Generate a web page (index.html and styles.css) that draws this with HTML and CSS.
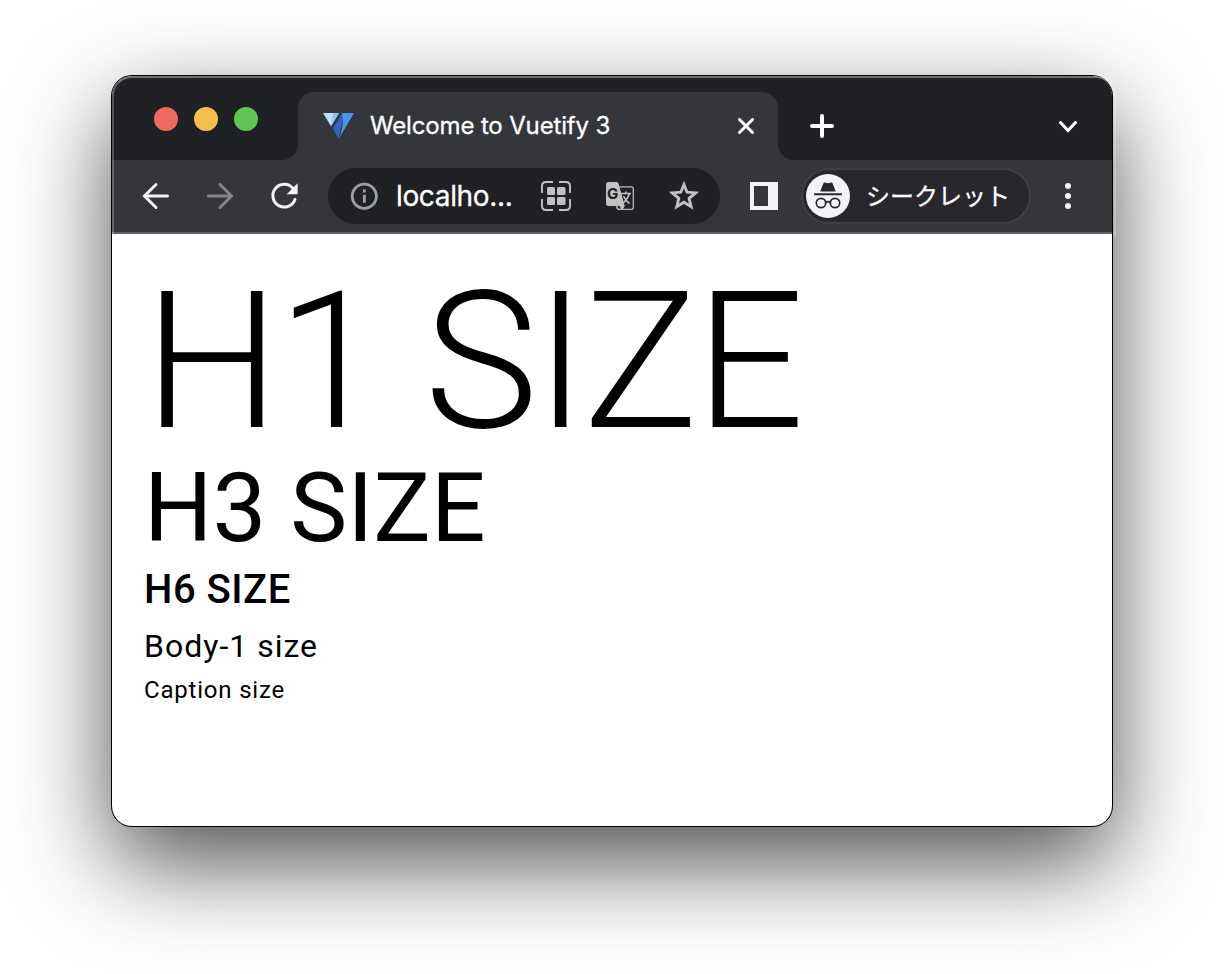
FILE: index.html
```html
<!DOCTYPE html>
<html lang="ja">
<head>
    <meta charset="UTF-8">
    <title>Welcome to Vuetify 3</title>
    <link rel="stylesheet" href="styles.css">
</head>
<body>
<div class="window">
    <div class="tab_bar">
        <div class="lights">
            <span class="light red"></span>
            <span class="light yellow"></span>
            <span class="light green"></span>
        </div>
        <div class="tab">
            <svg class="favicon" width="31" height="26" viewBox="0 0 31 26">
                <path fill="#b9dffc" d="M0 0H16L8 13.3z"/>
                <path fill="#86c1f8" d="M10.5 0H16L8 13.3C10 9 9 4 10.5 0z"/>
                <path fill="#3164bd" d="M19.3 0H21L15.7 26L9.8 15.6z"/>
                <path fill="#4596f0" d="M19.3 0H31L15.7 26C19.5 18 20.5 9 19.3 0z"/>
            </svg>
            <span class="tab_title">Welcome to Vuetify 3</span>
            <svg class="close" width="16" height="16" viewBox="0 0 16 16"><path d="M1.5 1.5L14.5 14.5M14.5 1.5L1.5 14.5"/></svg>
        </div>
        <svg class="plus" width="24" height="24" viewBox="0 0 24 24"><path d="M12 2V22M2 12H22"/></svg>
        <svg class="chevron" width="18" height="12" viewBox="0 0 18 12"><path d="M1.5 1.5L9 9.5L16.5 1.5"/></svg>
    </div>
    <div class="toolbar">
        <div class="btn">
            <svg width="28" height="28" viewBox="0 0 28 28"><path class="line" d="M25.5 14H3M14 2.5L2.5 14L14 25.5"/></svg>
        </div>
        <div class="btn dim">
            <svg width="28" height="28" viewBox="0 0 28 28"><path class="line" d="M2.5 14H25M14 2.5L25.5 14L14 25.5"/></svg>
        </div>
        <div class="btn">
            <svg width="28" height="28" viewBox="0 0 28 28">
                <path class="line" d="M22.7 6A11.4 11.4 0 1 0 25 17.5"/>
                <path fill="#f1f3f4" d="M27.6 1.2V12.2H16.6z"/>
            </svg>
        </div>
        <div class="address">
            <svg class="info" width="28" height="28" viewBox="0 0 28 28">
                <circle cx="14.3" cy="14.3" r="12.1" fill="none" stroke="#9aa0a6" stroke-width="2.8"/>
                <path fill="#9aa0a6" d="M12.9 7.6h2.9v2.9h-2.9zM12.9 12.7h2.9v8.1h-2.9z"/>
            </svg>
            <span class="url">localho...</span>
            <div class="btn">
                <svg width="30" height="30" viewBox="0 0 30 30">
                    <path fill="none" stroke="#c1c1c1" stroke-width="1.9" d="M1 12V5Q1 1 5 1H12M18 1H25Q29 1 29 5V12M29 18V25Q29 29 25 29H18M12 29H5Q1 29 1 25V18"/>
                    <g fill="#c1c1c1">
                        <rect x="6" y="6" width="8" height="8" rx="1.5"/>
                        <rect x="16" y="6" width="8.5" height="8" rx="1.5"/>
                        <rect x="6" y="16" width="8" height="8" rx="1.5"/>
                        <rect x="16" y="16" width="8.5" height="8" rx="1.5"/>
                    </g>
                </svg>
            </div>
            <div class="btn">
                <svg width="28" height="28" viewBox="0 0 28 28">
                    <rect x="11" y="5" width="16.2" height="22.2" rx="2" fill="none" stroke="#b8b8b8" stroke-width="1.6"/>
                    <path fill="#c1c1c1" d="M2.5 0H10.5Q12 0 12.5 1.5L19 24L16 28L13.5 24H2.5Q0 24 0 21.5V2.5Q0 0 2.5 0z"/>
                    <path fill="#202124" d="M13.8 5.8H26.4V26.4H17.6L19 24z"/>
                    <text class="tr_g" x="1" y="17">G</text>
                    <path fill="none" stroke="#c1c1c1" stroke-width="1.6" d="M15 11.5H25M19.8 9.5V11.5M23.4 11.5Q21.5 17.5 16.5 21.5M17.5 14Q19.5 18.5 23.5 21.5"/>
                </svg>
            </div>
            <div class="btn">
                <svg width="30" height="30" viewBox="0 0 30 30"><path fill="none" stroke="#c1c1c1" stroke-width="2.7" d="M15 4.2L17.9 11.4L25.9 12L19.8 17.1L21.7 25L15 20.8L8.3 25L10.2 17.1L4.1 12L12.1 11.4z" transform="translate(-1.1 -1) scale(1.07)"/></svg>
            </div>
        </div>
        <div class="btn panel">
            <svg width="28" height="28" viewBox="0 0 28 28"><path fill="#f1f3f4" fill-rule="evenodd" d="M0 0H28V28H0zM4 4V24H18V4z"/></svg>
        </div>
        <div class="incognito">
            <svg width="44" height="44" viewBox="0 0 44 44">
                <circle cx="22" cy="22" r="22" fill="#f1f3f4"/>
                <path fill="#28282c" d="M14.2 17.4L17.5 9Q18 8.2 19 8.6Q22 9.8 25 8.6Q26 8.2 26.5 9L29.8 17.4zM8 19.2H36V21.2H8z"/>
                <g fill="none" stroke="#28282c" stroke-width="1.7">
                    <circle cx="15" cy="29" r="4.7"/>
                    <circle cx="29" cy="29" r="4.7"/>
                    <path d="M19.6 28.4Q22 27 24.4 28.4"/>
                </g>
            </svg>
            <span>シークレット</span>
        </div>
        <div class="btn menu">
            <svg width="6" height="26" viewBox="0 0 6 26" fill="#f1f3f4">
                <circle cx="3" cy="3" r="3"/>
                <circle cx="3" cy="13" r="3"/>
                <circle cx="3" cy="23" r="3"/>
            </svg>
        </div>
    </div>
    <div class="container">
        <div class="text-h1">H1 SIZE</div>
        <div class="text-h3">H3 SIZE</div>
        <div class="text-h6">H6 SIZE</div>
        <div class="text-body-1">Body-1 size</div>
        <div class="text-caption">Caption size</div>
    </div>
</div>
</body>
</html>
```
FILE: styles.css
```css
*{
    margin: 0;
    padding: 0;
    box-sizing: border-box;
}
body{
    height: 974px;
    padding: 76px 112px;
    background: #fff;
    overflow: hidden;
    font-family: Inter, "Noto Sans CJK JP", sans-serif;
}
svg{
    display: block;
    flex: none;
}
.window{
    position: relative;
    width: 1000px;
    height: 750px;
    border-radius: 20px;
    background: #fff;
    box-shadow: 0 0 0 1px #000, 0 36px 96px rgba(0,0,0,0.7);
}
/* 窗口上半部分的高光边 */
.window:after{
    content: "";
    position: absolute;
    left: 0;
    top: 0;
    width: 1000px;
    height: 158px;
    border: 2px solid rgba(255,255,255,0.24);
    border-top-color: rgba(255,255,255,0.36);
    border-bottom: none;
    border-radius: 20px 20px 0 0;
    pointer-events: none;
}
.tab_bar{
    display: flex;
    align-items: center;
    height: 84px;
    padding-top: 16px;
    background: #202124;
    border-radius: 20px 20px 0 0;
}
.lights{
    display: flex;
    gap: 16px;
    width: 186px;
    padding: 0 0 14px 42px;
}
.light{
    width: 24px;
    height: 24px;
    border-radius: 50%;
}
.red{
    background: #ed6a5e;
}
.yellow{
    background: #f5bf4f;
}
.green{
    background: #61c554;
}
.tab{
    position: relative;
    display: flex;
    align-items: center;
    width: 480px;
    height: 68px;
    padding: 0 24px 0 25px;
    background: #35363a;
    border-radius: 16px 16px 0 0;
}
/* 标签底部的反向圆角 */
.tab:before,
.tab:after{
    content: "";
    position: absolute;
    bottom: 0;
    width: 16px;
    height: 16px;
}
.tab:before{
    left: -16px;
    background: radial-gradient(circle at 0 0, transparent 15.5px, #35363a 16.5px);
}
.tab:after{
    right: -16px;
    background: radial-gradient(circle at 100% 0, transparent 15.5px, #35363a 16.5px);
}
.tab_title{
    flex: 1;
    margin-left: 16px;
    font-size: 24px;
    line-height: 30px;
    letter-spacing: -0.15px;
    color: #fff;
    -webkit-text-stroke: 0.3px #fff;
    white-space: nowrap;
}
.close,
.plus,
.chevron{
    fill: none;
    stroke: #fff;
    stroke-width: 3;
    stroke-linecap: round;
}
.plus{
    margin-left: 32px;
    stroke-width: 4;
}
.chevron{
    margin: 2px 35px 0 auto;
}
.toolbar{
    display: flex;
    align-items: center;
    height: 74px;
    padding: 0 12px;
    background: #35363a;
    border-bottom: 2px solid #5f6065;
}
.btn{
    display: flex;
    flex: none;
    align-items: center;
    justify-content: center;
    width: 64px;
}
.line{
    fill: none;
    stroke: #f1f3f4;
    stroke-width: 3;
    stroke-linecap: round;
}
.dim .line{
    stroke: #86878a;
}
.address{
    display: flex;
    align-items: center;
    width: 392px;
    height: 56px;
    margin-left: 12px;
    padding: 0 4px 0 22px;
    background: #202124;
    border-radius: 28px;
}
.url{
    flex: 1;
    margin-left: 18px;
    font-size: 28px;
    letter-spacing: -0.35px;
    color: #fff;
    -webkit-text-stroke: 0.3px #fff;
    white-space: nowrap;
}
.tr_g{
    font-family: Inter, sans-serif;
    font-size: 15px;
    font-weight: 700;
    fill: #202124;
}
.panel{
    margin-left: 12px;
}
.incognito{
    display: flex;
    align-items: center;
    width: 230px;
    height: 56px;
    margin-left: 5px;
    padding-left: 3px;
    background: #28282c;
    border: 2px solid #3f4045;
    border-radius: 28px;
    font-size: 24px;
    color: #fff;
}
.incognito span{
    margin-left: 16px;
    padding-bottom: 3px;
    -webkit-text-stroke: 0.3px #fff;
    white-space: nowrap;
}
.menu{
    margin-left: 5px;
}
.container{
    padding: 32px;
    font-family: Roboto, sans-serif;
    color: #000;
}
.text-h1{
    font-size: 192px;
    font-weight: 300;
    line-height: 192px;
    letter-spacing: -0.015625em;
}
.text-h3{
    font-size: 96px;
    font-weight: 400;
    line-height: 100px;
}
.text-h6{
    font-size: 40px;
    font-weight: 500;
    line-height: 64px;
    letter-spacing: 0.0125em;
}
.text-body-1{
    font-size: 32px;
    line-height: 48px;
    letter-spacing: 0.03125em;
}
.text-caption{
    font-size: 24px;
    line-height: 40px;
    letter-spacing: 0.0333em;
}
```
